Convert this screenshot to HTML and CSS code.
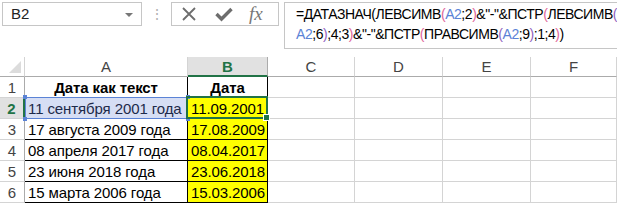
FILE: index.html
```html
<!DOCTYPE html>
<html lang="ru">
<head>
    <meta charset="UTF-8">
    <title>ДАТАЗНАЧ</title>
    <link rel="stylesheet" href="styles.css">
</head>
<body>
    <div class="topbar">
        <div class="namebox">
            <span>B2</span>
            <span class="drop"></span>
        </div>
        <div class="dots">⋮</div>
        <div class="fxbox">
            <svg width="16" height="16" viewBox="0 0 16 16" class="ico">
                <path d="M2 2 L14 14 M14 2 L2 14" stroke="#6d6d6d" stroke-width="1.8" fill="none"/>
            </svg>
            <svg width="18" height="16" viewBox="0 0 18 16" class="ico">
                <path d="M1.5 8 L6.5 13 L16.5 3" stroke="#6d6d6d" stroke-width="3.4" fill="none"/>
            </svg>
            <span class="fx">fx</span>
        </div>
        <div class="formula">=ДАТАЗНАЧ(ЛЕВСИМВ<span class="p2">(</span><span class="ref">A2</span>;2<span class="p2">)</span>&amp;"-"&amp;ПСТР<span class="p2">(</span>ЛЕВСИМВ<span class="p3">(</span><br><span class="ref">A2</span>;6<span class="p3">)</span>;4;3<span class="p2">)</span>&amp;"-"&amp;ПСТР<span class="p2">(</span>ПРАВСИМВ<span class="p3">(</span><span class="ref">A2</span>;9<span class="p3">)</span>;1;4<span class="p2">)</span>)</div>
    </div>

    <div class="sheet">
        <div class="corner"></div>
        <div class="colhead">A</div>
        <div class="colhead active">B</div>
        <div class="colhead">C</div>
        <div class="colhead">D</div>
        <div class="colhead">E</div>
        <div class="colhead">F</div>

        <div class="rowhead">1</div>
        <div class="cell tb head">Дата как текст</div>
        <div class="cell tb head">Дата</div>
        <div class="cell"></div><div class="cell"></div><div class="cell"></div><div class="cell"></div>

        <div class="rowhead active">2</div>
        <div class="cell tb ref-cell">11 сентября 2001 года</div>
        <div class="cell tb date current">11.09.2001</div>
        <div class="cell"></div><div class="cell"></div><div class="cell"></div><div class="cell"></div>

        <div class="rowhead">3</div>
        <div class="cell tb">17 августа 2009 года</div>
        <div class="cell tb date">17.08.2009</div>
        <div class="cell"></div><div class="cell"></div><div class="cell"></div><div class="cell"></div>

        <div class="rowhead">4</div>
        <div class="cell tb">08 апреля 2017 года</div>
        <div class="cell tb date">08.04.2017</div>
        <div class="cell"></div><div class="cell"></div><div class="cell"></div><div class="cell"></div>

        <div class="rowhead">5</div>
        <div class="cell tb">23 июня 2018 года</div>
        <div class="cell tb date">23.06.2018</div>
        <div class="cell"></div><div class="cell"></div><div class="cell"></div><div class="cell"></div>

        <div class="rowhead">6</div>
        <div class="cell tb">15 марта 2006 года</div>
        <div class="cell tb date">15.03.2006</div>
        <div class="cell"></div><div class="cell"></div><div class="cell"></div><div class="cell"></div>
    </div>
</body>
</html>
```

FILE: styles.css
```css
body {
    margin: 0;
    background: #fff;
    font-family: 'Liberation Sans', Arial, sans-serif;
    font-size: 15px;
    color: #000;
    overflow: hidden;
}
.topbar {
    display: flex;
    align-items: flex-start;
    height: 57px;
    padding-top: 2px;
    box-sizing: border-box;
}
.namebox {
    position: relative;
    margin-left: 2px;
    width: 140px;
    height: 24px;
    box-sizing: border-box;
    border: 1px solid #c6c6c6;
    padding-left: 8px;
    line-height: 22px;
    color: #222;
}
.drop {
    position: absolute;
    right: 8px;
    top: 10px;
    border-left: 4px solid transparent;
    border-right: 4px solid transparent;
    border-top: 4px solid #777;
}
.dots {
    width: 29px;
    text-align: center;
    color: #b0b0b0;
    line-height: 24px;
    font-size: 14px;
}
.fxbox {
    display: flex;
    align-items: center;
    width: 108px;
    height: 24px;
    box-sizing: border-box;
    border: 1px solid #c6c6c6;
    padding-left: 9px;
}
.ico {
    display: block;
}
.ico + .ico {
    margin-left: 18px;
}
.fx {
    margin-left: 16px;
    font-family: 'Liberation Serif', 'DejaVu Serif', serif;
    font-style: italic;
    font-size: 19px;
    color: #777;
    line-height: 20px;
}
.formula {
    margin-left: 5px;
    flex: 1;
    height: 44px;
    border: 1px solid #c6c6c6;
    border-right: none;
    padding: 1px 0 0 11px;
    line-height: 20px;
    white-space: nowrap;
    overflow: hidden;
    font-size: 14px;
    letter-spacing: -0.45px;
    word-spacing: 0;
}
.ref {
    color: #5b83d6;
}
.p2 {
    color: #e0669a;
}
.p3 {
    color: #8f62c0;
}
.sheet {
    display: grid;
    grid-template-columns: 25px 163px 80px 87px 88px 88px 86px;
    grid-template-rows: 20px repeat(6, 21px);
}
.sheet > div {
    box-sizing: border-box;
}
.corner {
    position: relative;
    border-right: 1px solid #d4d4d4;
    border-bottom: 1px solid #ababab;
}
.corner::after {
    content: "";
    position: absolute;
    right: 3px;
    bottom: 3px;
    border-left: 12px solid transparent;
    border-bottom: 12px solid #dcdcdc;
}
.colhead {
    border-right: 1px solid #d4d4d4;
    border-bottom: 1px solid #ababab;
    text-align: center;
    line-height: 20px;
    color: #444;
}
.colhead.active {
    background: #e1e1e1;
    color: #217346;
    font-weight: bold;
    border-bottom: 2px solid #217346;
    border-right-color: #ababab;
}
.rowhead {
    border-right: 1px solid #ababab;
    border-bottom: 1px solid #d4d4d4;
    text-align: center;
    line-height: 21px;
    color: #444;
}
.rowhead.active {
    background: #e1e1e1;
    color: #217346;
    font-weight: bold;
    border-right: 2px solid #217346;
}
.cell {
    border-right: 1px solid #d4d4d4;
    border-bottom: 1px solid #d4d4d4;
    line-height: 21px;
    padding: 0 3px;
    white-space: nowrap;
    position: relative;
    letter-spacing: -0.1px;
}
.cell.tb {
    border-right-color: #000;
    border-bottom-color: #000;
}
.head {
    font-weight: bold;
    text-align: center;
}
.date {
    background: #ffff00;
    text-align: right;
}
.ref-cell {
    background: #d6def4;
    color: #1d2a4a;
}
.ref-cell::after {
    content: "";
    position: absolute;
    left: 0;
    top: -1px;
    right: -1px;
    bottom: -1px;
    border: 1px solid #5b83d6;
}
.ref-cell::before {
    content: "";
    position: absolute;
    left: -2px;
    top: -3px;
    right: -3px;
    bottom: -3px;
    z-index: 1;
    background:
        linear-gradient(#5b83d6, #5b83d6) left top / 4px 4px no-repeat,
        linear-gradient(#5b83d6, #5b83d6) right top / 4px 4px no-repeat,
        linear-gradient(#5b83d6, #5b83d6) left bottom / 4px 4px no-repeat,
        linear-gradient(#5b83d6, #5b83d6) right bottom / 4px 4px no-repeat;
}
.current::after {
    content: "";
    position: absolute;
    left: -2px;
    top: -2px;
    right: -1px;
    bottom: -1px;
    border: 2px solid #217346;
    z-index: 2;
}
.current::before {
    content: "";
    position: absolute;
    right: -3px;
    bottom: -3px;
    width: 5px;
    height: 5px;
    background: #217346;
    border: 1px solid #fff;
    z-index: 3;
}
```
